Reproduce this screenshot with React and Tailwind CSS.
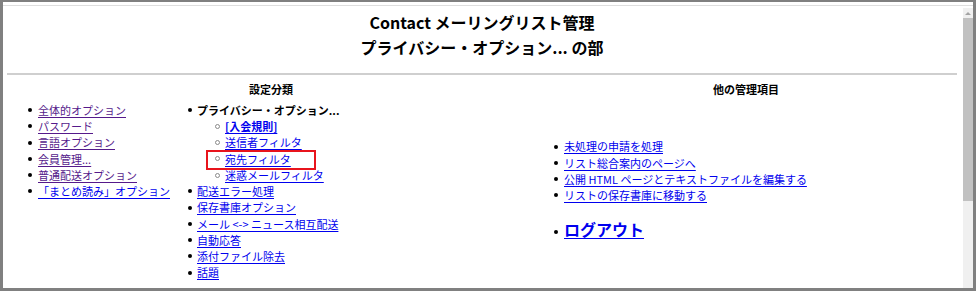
import React from "react";

const visited = [
  "全体的オプション",
  "パスワード",
  "言語オプション",
  "会員管理...",
  "普通配送オプション",
];

const middleRest = [
  "配送エラー処理",
  "保存書庫オプション",
  "メール <-> ニュース相互配送",
  "自動応答",
  "添付ファイル除去",
  "話題",
];

const otherItems = [
  "未処理の申請を処理",
  "リスト総合案内のページへ",
  "公開 HTML ページとテキストファイルを編集する",
  "リストの保存書庫に移動する",
];

const Dot = () => (
  <span className="w-[4px] h-[4px] rounded-full bg-black shrink-0" />
);

const Circle = () => (
  <span className="w-[5px] h-[5px] rounded-full border border-[#8a8a8a] shrink-0" />
);

const Item = ({ children, gap = "mr-[6px]", marker = <Dot /> }) => (
  <li className="flex items-center h-[16.25px] whitespace-pre">
    <span className={`flex ${gap}`}>{marker}</span>
    {children}
  </li>
);

const link = "underline underline-offset-[2px] text-[#0000ee]";
const visitedLink = "underline underline-offset-[2px] text-[#551a8b]";

export default function App() {
  return (
    <div className="w-[976px] h-[291px] bg-white border-[#808080] border-t-2 border-x-[3px] border-b-[3px] flex flex-col overflow-hidden font-['Noto_Sans_CJK_JP',sans-serif] text-black">
      {/* top strip */}
      <div className="h-[6px] shrink-0">
        <div className="mt-[3px] h-px bg-[#dedede]" />
      </div>

      <div className="flex flex-1 min-h-0">
        <div className="flex-1 flex flex-col pl-[4px] pr-[6px]">
          <h2 className="pt-[2px] text-center text-[16px] leading-[25px] font-bold">
            Contact メーリングリスト管理
            <br />
            プライバシー・オプション... の部
          </h2>

          <div className="mt-[13px] h-[2px] bg-[#cfcfcf]" />

          <div className="flex">
            {/* settings categories */}
            <div className="w-[528px] flex flex-col">
              <div className="mt-[7px] text-center text-[11px] leading-[14px] font-bold">設定分類</div>
              <div className="flex mt-[6px] text-[11px]">
                <ul className="w-[181px] pl-[21px]">
                  {visited.map((t) => (
                    <Item key={t}>
                      <a className={visitedLink} href="#">{t}</a>
                    </Item>
                  ))}
                  <Item>
                    <a className={link} href="#">「まとめ読み」オプション</a>
                  </Item>
                </ul>
                <ul className="flex-1">
                  <Item gap="mr-[5px]">
                    <span className="font-bold">プライバシー・オプション...</span>
                  </Item>
                  <ul className="pl-[27px]">
                    <Item gap="mr-[5px]" marker={<Circle />}>
                      <a className={`${link} font-bold`} href="#">[入会規則]</a>
                    </Item>
                    <Item gap="mr-[5px]" marker={<Circle />}>
                      <a className={link} href="#">送信者フィルタ</a>
                    </Item>
                    <li className="relative flex items-center h-[16.25px]">
                      <span className="flex mr-[5px]"><Circle /></span>
                      <a className={link} href="#">宛先フィルタ</a>
                      <span className="absolute left-[-9px] top-[-1px] w-[110px] h-[20px] border-2 border-[#e8141c]" />
                    </li>
                    <Item gap="mr-[5px]" marker={<Circle />}>
                      <a className={link} href="#">迷惑メールフィルタ</a>
                    </Item>
                  </ul>
                  {middleRest.map((t) => (
                    <Item key={t} gap="mr-[5px]">
                      <a className={link} href="#">{t}</a>
                    </Item>
                  ))}
                </ul>
              </div>
            </div>

            {/* other admin items */}
            <div className="flex-1 flex flex-col">
              <div className="mt-[7px] text-center text-[11px] leading-[14px] font-bold">他の管理項目</div>
              <div className="flex-1 flex items-center">
                <ul className="pl-[19px] pt-[3px] text-[11px]">
                  {otherItems.map((t) => (
                    <Item key={t}>
                      <a className={link} href="#">{t}</a>
                    </Item>
                  ))}
                  <li className="flex items-center mt-[14px] h-[24px]">
                    <span className="flex mr-[6px] mt-[5px]"><Dot /></span>
                    <a className={`${link} text-[16px] font-bold`} href="#">ログアウト</a>
                  </li>
                </ul>
              </div>
            </div>
          </div>
        </div>

        {/* scrollbar */}
        <div className="w-[10px] bg-[#f0f0f0] flex flex-col">
          <div className="h-[10px] flex items-center justify-center">
            <svg width="6" height="4" viewBox="0 0 6 4">
              <path d="M0 4 L3 1 L6 4 Z" fill="#a3a3a3" />
            </svg>
          </div>
          <div className="h-[183px] bg-[#c1c1c1]" />
        </div>
      </div>
    </div>
  );
}
